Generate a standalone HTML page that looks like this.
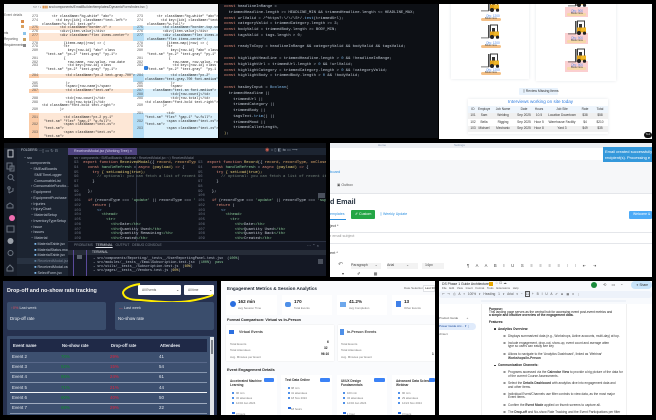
<!DOCTYPE html>
<html><head><meta charset="utf-8"><style>
html,body{margin:0;padding:0;background:#000}
#r{position:relative;width:656px;height:420px;overflow:hidden;background:#000;font-family:"Liberation Sans",sans-serif}
.p{position:absolute;overflow:hidden}
.p div,.p svg{position:absolute}
.t{white-space:nowrap;line-height:1}
.m{font-family:"Liberation Mono",monospace;white-space:pre;line-height:1}
.s{white-space:pre;line-height:1}
.k{color:#e8907e}.c{color:#7fb8e8}.g{color:#8fd19e}.y{color:#e8cf7a}
.b{font-weight:bold}
table{border-collapse:collapse;table-layout:fixed}
td{padding:0;text-align:center;height:6.4px;line-height:6.4px;font-size:3.2px;color:#333;white-space:nowrap;overflow:hidden}
</style></head><body><div id="r">

<!-- P1 diff -->
<div class="p" style="left:4px;top:4px;width:214px;height:134px;background:#fff">
<div style="left:0;top:0;width:214px;height:8px;background:#f2f4f6"></div>
<div class="t" style="left:29px;top:2px;font-size:3.4px;color:#444">&lt;&gt; ↑↓ <span style="color:#d9822b">▮▮▮</span> src/components/EmailBuilder/templates/DynamicForm/index.tsx ▯</div>
<div class="t" style="left:0;top:10px;font-size:3.2px;color:#666">Event details</div>
<div style="left:17px;top:16px;width:3px;height:3px;background:#d98b4a"></div>
<div style="left:17px;top:21px;width:3px;height:3px;background:#d9a060"></div>
<div class="t" style="left:0;top:28px;font-size:3.2px;color:#555">nts</div>
<div style="left:19px;top:28px;width:3px;height:3px;background:#8cc4ea"></div>
<div class="t" style="left:0;top:34px;font-size:3.2px;color:#555">Reporting</div>
<div style="left:19px;top:34px;width:3px;height:3px;background:#c8a060"></div>
<div class="t" style="left:0;top:40px;font-size:3.2px;color:#555">Requirements</div>
<div style="left:19px;top:40px;width:3px;height:3px;background:#888"></div>

<div style="left:25px;top:22px;width:104px;height:4px;background:#fde7d6"></div>
<div style="left:25px;top:29px;width:104px;height:8px;background:#fde7d6"></div>
<div style="left:25px;top:70px;width:104px;height:4px;background:#fde7d6"></div>
<div style="left:25px;top:85px;width:104px;height:4px;background:#fde7d6"></div>
<div style="left:25px;top:109px;width:104px;height:25px;background:#fde7d6"></div>
<div style="left:25px;top:22px;width:10px;height:4px;background:#fbcba6"></div>
<div style="left:25px;top:29px;width:10px;height:8px;background:#fbcba6"></div>
<div style="left:25px;top:70px;width:10px;height:4px;background:#fbcba6"></div>
<div style="left:25px;top:85px;width:10px;height:4px;background:#fbcba6"></div>
<div style="left:25px;top:109px;width:10px;height:25px;background:#fbcba6"></div>

<div style="left:129px;top:22px;width:85px;height:4px;background:#dcf1fc"></div>
<div style="left:129px;top:29px;width:85px;height:8px;background:#dcf1fc"></div>
<div style="left:129px;top:70px;width:85px;height:8px;background:#dcf1fc"></div>
<div style="left:129px;top:85px;width:85px;height:8px;background:#dcf1fc"></div>
<div style="left:129px;top:109px;width:85px;height:25px;background:#dcf1fc"></div>
<div style="left:129px;top:22px;width:11px;height:4px;background:#b5def6"></div>
<div style="left:129px;top:29px;width:11px;height:8px;background:#b5def6"></div>
<div style="left:129px;top:70px;width:11px;height:8px;background:#b5def6"></div>
<div style="left:129px;top:85px;width:11px;height:8px;background:#b5def6"></div>
<div style="left:129px;top:109px;width:11px;height:25px;background:#b5def6"></div>
<div style="left:140px;top:62px;width:4px;height:4px;background:#2f7fe0;border-radius:1px"></div>

<div class="m" style="left:28px;top:11px;font-size:3.3px;line-height:3.8px;color:#555">273  <span style="color:#222">     &lt;tr className="bg-white" "abc"&gt;</span>
274  <span style="color:#222">       &lt;td key={idx} className="text-left"&gt;</span>
<span style="color:#222">     className="w-full text-sm"&gt;</span>
275  <span style="color:#222">         &lt;td className="border-t" &gt;</span>
276  <span style="color:#222">         &lt;div&gt;{item.value}&lt;/div&gt;</span>
277  <span style="color:#222">         &lt;div className="flex items-center"&gt;</span>

278  <span style="color:#222">           {items.map((row) =&gt; (</span>
279  <span style="color:#222">           &lt;tr</span>
280  <span style="color:#222">             key={row.id} "abc" class</span>
<span style="color:#222">       "text-sm" "px-2" "text-gray" "py-1"&gt;</span>
281  <span style="color:#222">           {</span>
282  <span style="color:#222">             row.name, row.value, row.date</span>
283  <span style="color:#222">             &lt;td key={row.id} class</span>
<span style="color:#222">       "text-sm" "px-2" "text-gray" "py-1"&gt;</span></div>
<div class="m" style="left:28px;top:70px;font-size:3.3px;line-height:3.8px;color:#555">284  <span style="color:#222">            &lt;td className="px-2 text-gray-700"&gt;</span>

285  <span style="color:#222">            )&gt;</span>
286  <span style="color:#222">            &lt;span&gt;{row.name}&lt;/span&gt;</span>
287  <span style="color:#222">            &lt;td className="text-sm"&gt;</span>

288  <span style="color:#222">            &lt;td&gt;{row.count}&lt;/td&gt;</span>
289  <span style="color:#222">            &lt;td&gt;{row.total}&lt;/td&gt;</span>
<span style="color:#222">     &lt;td className="font-bold text-right"&gt;</span>
290  <span style="color:#222">         )&gt;</span>

291  <span style="color:#222">           &lt;td className="px-2 py-1"</span>
<span style="color:#222">      "text-sm" "flex" "gap-1" "w-full"&gt;</span>
292  <span style="color:#222">           &lt;span className="text-xs"&gt;</span>
<span style="color:#222">      "text-sm"&gt;</span>
293  <span style="color:#222">           &lt;span className="text-xs"&gt;</span>
<span style="color:#222">      "text-sm"&gt;</span></div>

<div class="m" style="left:133px;top:11px;font-size:3.3px;line-height:3.8px;color:#555">273 <span style="color:#222">      &lt;tr className="bg-white" "abc"&gt;</span>
274 <span style="color:#222">        &lt;td key={idx} className="text-l</span>
<span style="color:#222">     className="w-full"&gt;</span>
275 <span style="color:#222">         &lt;td className="border-top-solid</span>
276 <span style="color:#222">         &lt;div&gt;{item.value}&lt;/div&gt;</span>
277 <span style="color:#222">         &lt;div className="flex items-cent</span>
<span style="color:#222">     className="flex items-center"&gt;</span>
278 <span style="color:#222">           {items.map((row) =&gt; (</span>
279 <span style="color:#222">           &lt;tr</span>
280 <span style="color:#222">             key={row.id} "abc" class</span>
<span style="color:#222">     "text-sm" "px-2" "text-gray" "py-1"</span>
281 <span style="color:#222">            {</span>
282 <span style="color:#222">              row.name, row.value, row.</span>
283 <span style="color:#222">              &lt;td key={row.id} class</span>
<span style="color:#222">     "text-sm" "px-2" "text-gray"  "py-1</span></div>
<div class="m" style="left:133px;top:70px;font-size:3.3px;line-height:3.8px;color:#555">284 <span style="color:#222">             &lt;td className="px-2"</span>
<span style="color:#222">    className="text-gray-700 font-medium"&gt;</span>
285 <span style="color:#222">             )&gt;</span>
286 <span style="color:#222">             &lt;span&gt;</span>
287 <span style="color:#222">    className="text-sm font-medium"&gt;</span>
288 <span style="color:#222">             &lt;td&gt;{row.count}&lt;/td&gt;</span>
289 <span style="color:#222">             &lt;td&gt;{row.total}&lt;/td&gt;</span>
<span style="color:#222">    &lt;td className="font-bold text-right"&gt;</span>
290 <span style="color:#222">         )&gt;</span>

291 <span style="color:#222">           &lt;td&gt;</span>
<span style="color:#222">    "text-sm" "flex" "gap-1" "w-full"&gt;</span>
292 <span style="color:#222">           &lt;span className="text-xs"&gt;</span>
<span style="color:#222">    "text-sm"&gt;</span>
293 <span style="color:#222">           &lt;span className="text-xs"&gt;</span></div>
</div>

<!-- P2 code -->
<div class="p" style="left:219px;top:4px;width:219px;height:134px;background:#0d1015">
<div class="m" style="left:5px;top:1px;font-size:3.84px;line-height:5.78px;color:#c6ced8"><span class="k">const</span> headlineInRange =
  trimmedHeadline.length &gt;= HEADLINE_MIN &amp;&amp; trimmedHeadline.length &lt;= HEADLINE_MAX;
<span class="k">const</span> urlValid = /^https?:\/\/\S+/.<span class="c">test</span>(trimmedUrl);
<span class="k">const</span> categoryValid = trimmedCategory.length &gt;= 3;
<span class="k">const</span> bodyValid = trimmedBody.length &gt;= BODY_MIN;
<span class="k">const</span> tagsValid = tags.length &gt; 0;

<span class="k">const</span> readyToCopy = headlineInRange &amp;&amp; categoryValid &amp;&amp; bodyValid &amp;&amp; tagsValid;

<span class="k">const</span> highlightHeadline = trimmedHeadline.length &gt; <span class="c">0</span> &amp;&amp; !headlineInRange;
<span class="k">const</span> highlightUrl = trimmedUrl.length &gt; <span class="c">0</span> &amp;&amp; !urlValid;
<span class="k">const</span> highlightCategory = trimmedCategory.length &gt; <span class="c">0</span> &amp;&amp; !categoryValid;
<span class="k">const</span> highlightBody = trimmedBody.length &gt; <span class="c">0</span> &amp;&amp; !bodyValid;

<span class="k">const</span> hasAnyInput = <span class="c">Boolean</span>(
  trimmedHeadline ||
    trimmedUrl ||
    trimmedCategory ||
    trimmedBody ||
    tagsText.<span class="c">trim</span>() ||
    trimmedMood ||
    trimmedCallerLength,
<span class="y">)</span>;</div>
</div>

<!-- P3 forklifts -->
<div class="p" style="left:439px;top:4px;width:213px;height:135px;background:#fff">
<div style="left:12px;top:-4px;width:78px;height:79px;background:#fff;box-shadow:0 0 3px #e4e6ea"></div>
<div style="left:97px;top:-4px;width:80px;height:81px;background:#fff;box-shadow:0 0 3px #e4e6ea"></div>
<div style="left:126px;top:3px;width:23px;height:10px;background:#fbcfd0"></div>
<div style="left:126px;top:29px;width:23px;height:11px;background:#fbcfd0"></div>
<div style="left:126px;top:57px;width:23px;height:11px;background:#fbcfd0"></div>
<svg style="left:0;top:0" width="213" height="80" viewBox="0 0 213 80">
<defs><g id="fk"><rect x="9.500" y="1" width="7" height="7" fill="none" stroke="#3a3a3a" stroke-width="1"/><rect x="11" y="4" width="3" height="4" fill="#333"/><rect x="9" y="7.500" width="9" height="5" fill="#e2a31c"/><rect x="13" y="8" width="5" height="3" fill="#f0b828"/><rect x="7" y="1" width="1.600" height="13" fill="#4a4a4a"/><rect x="0" y="13.500" width="8" height=".8" fill="#555"/><circle cx="11" cy="13" r="2" fill="#222"/><circle cx="16.500" cy="13.200" r="1.600" fill="#222"/></g></defs>
<use href="#fk" x="42" y="-7"/><use href="#fk" x="42" y="20"/><use href="#fk" x="42" y="49"/>
<use href="#fk" x="129" y="-12"/><use href="#fk" x="129" y="16"/><use href="#fk" x="129" y="44"/>
</svg>
<div class="t" style="left:47px;top:10.500px;font-size:3.2px;color:#5a8fe8">Qty: 1200</div>
<div class="t" style="left:47px;top:37.500px;font-size:3.2px;color:#5a8fe8">Qty: 1200</div>
<div class="t" style="left:47px;top:64.500px;font-size:3.2px;color:#5a8fe8">Qty: 1200</div>
<div style="left:42px;top:13.500px;width:20px;height:3.500px;background:#f4c087;border-radius:2px"></div>
<div style="left:42px;top:40.500px;width:20px;height:3.500px;background:#f4c087;border-radius:2px"></div>
<div style="left:42px;top:67.500px;width:20px;height:3.500px;background:#f4c087;border-radius:2px"></div>
<div class="t" style="left:46px;top:14px;font-size:2.6px;color:#444">Book Now</div>
<div class="t" style="left:46px;top:41px;font-size:2.6px;color:#444">Book Now</div>
<div class="t" style="left:46px;top:68px;font-size:2.6px;color:#444">Book Now</div>
<div class="t" style="left:132px;top:5.500px;font-size:3.2px;color:#5a8fe8">Qty: 900</div>
<div class="t" style="left:132px;top:32.500px;font-size:3.2px;color:#5a8fe8">Qty: 900</div>
<div class="t" style="left:132px;top:59.500px;font-size:3.2px;color:#5a8fe8">Qty: 900</div>
<div style="left:128px;top:8.500px;width:19px;height:3.500px;background:#f6d8a8;border-radius:1px"></div>
<div style="left:128px;top:35.500px;width:19px;height:3.500px;background:#f6d8a8;border-radius:1px"></div>
<div style="left:128px;top:62.500px;width:19px;height:3.500px;background:#f6d8a8;border-radius:1px"></div>
<div class="t" style="left:132px;top:9px;font-size:2.6px;color:#444">Book Now</div>
<div class="t" style="left:132px;top:36px;font-size:2.6px;color:#444">Book Now</div>
<div class="t" style="left:132px;top:63px;font-size:2.6px;color:#444">Book Now</div>
<div style="left:80px;top:84px;width:39px;height:7px;background:#e8f2fc;border-radius:1px"></div>
<div class="t" style="left:84px;top:86px;font-size:3.4px;color:#333">▯ Review Missing Items</div>
<div style="left:29px;top:95px;width:140px;height:35px;background:#fff;box-shadow:0 0 3px #e4e6ea"></div>
<div class="t" style="left:69px;top:95.500px;font-size:4.6px;color:#2f7de0">Interviews working on site today</div>
<div style="left:29px;top:102px;width:140px;height:6.500px;background:#eef5fc"></div>
<div style="left:29px;top:108.500px;width:140px;height:6.500px;background:#f0f0f0"></div>
<div style="left:29px;top:121.500px;width:140px;height:6.500px;background:#f0f0f0"></div>
<div style="left:29px;top:102px;width:140px">
<table style="width:140px"><colgroup><col style="width:10px"><col style="width:12px"><col style="width:26px"><col style="width:16px"><col style="width:14px"><col style="width:32px"><col style="width:14px"><col style="width:16px"></colgroup>
<tr><td>ID</td><td>Employee</td><td>Job Name</td><td>Date</td><td>Hours</td><td>Job Site</td><td>Rate</td><td>Total</td></tr>
<tr><td>101</td><td>Sam</td><td>Welding</td><td>Sep 2025</td><td>10.5</td><td>Location Downtown</td><td>$38</td><td>$58</td></tr>
<tr><td>102</td><td>Bella</td><td>Rigging</td><td>Sep 2025</td><td>Hour 5</td><td>Warehouse Facility</td><td>$4</td><td>$210</td></tr>
<tr><td>103</td><td>Michael</td><td>Mechanic</td><td>Sep 2025</td><td>Hour 8</td><td>Yard 3</td><td>$49</td><td>$35</td></tr>
</table></div>
<div style="left:205px;top:128px;width:8px;height:6px;background:#111;border-radius:3px"></div>
<div class="t" style="left:206.500px;top:129.500px;font-size:2.6px;color:#ddd">Tool</div>
</div>

<!-- P4 vscode -->
<div class="p" style="left:4px;top:143px;width:322px;height:133px;background:#10131b">
<div style="left:0;top:0;width:322px;height:5px;background:#0f1218"></div>
<div style="left:0;top:5px;width:13px;height:128px;background:#181e2a"></div>
<div style="left:13px;top:5px;width:51px;height:128px;background:#1c2431"></div>
<svg style="left:0;top:0" width="14" height="133" fill="none" stroke="#6b7480" stroke-width="1">
<rect x="4" y="7" width="5" height="7" stroke="#c4c8cf"/><path d="M3 20h5v6H3zM6 23h4v5H6z"/><circle cx="6.500" cy="34" r="2.400"/><path d="M8.300 35.800l2 2"/><circle cx="5" cy="45" r="1.200"/><path d="M5 46v4M9 45v3l-4 2"/><path d="M3 62l3-2 3 2v3H3z"/><circle cx="8" cy="75" r="3" fill="#ef6db0" stroke="none"/><rect x="3" y="83" width="7" height="6"/><circle cx="6.500" cy="98" r="3" fill="#9aa0a8" stroke="none"/><circle cx="6.500" cy="110" r="2.500"/><path d="M3 125l3-3 3 3v3H3z"/></svg>
<div class="t" style="left:17px;top:6px;font-size:3.4px;color:#c8ced8">FOLDERS: ...</div>
<div class="t" style="left:38px;top:6px;font-size:4px;color:#8a93a0">▯ ▭ ↻ ⊟</div>
<div class="s" style="left:20px;top:12.500px;font-size:3.7px;line-height:5.75px;color:#bcc4d0">~ src
   ~ components
      ~ SMEadBoards
          SMETimeLogger
          ConsumableList
       › ConsumableFunctio...
       › Equipment
       › EquipmentPurchase
       › Injuries
       › InjuryChart
       ~ MaterialSetup
       › InventoryTypeSetup
       › Issue
       › Issues
       ~ Material
          <span class="c">■</span> MaterialTable.jsx
          <span class="c">■</span> MaterialStatus.module...
          <span class="c">■</span> MaterialTable.jsx
          <span class="c">■</span> ReceivedModal.jsx
          <span class="c">■</span> ReceivedModal.css
          <span class="c">■</span> SelectForm.jsx</div>
<div style="left:13px;top:115px;width:51px;height:6px;background:#33405280"></div>
<div style="left:64px;top:5px;width:258px;height:7px;background:#1c2431"></div>
<div style="left:64px;top:5px;width:69px;height:7px;background:#4f4480"></div>
<div class="t" style="left:70px;top:7px;font-size:3.6px;color:#dcd4f0">ReceivedModal.jsx (Working Tree) ×</div>
<div class="t" style="left:261px;top:5px;font-size:5px;color:#d06050">◉ <span style="color:#8a93a0;font-size:4px">⌂ ▯ ◧ ⇆ ▭ ⟶</span></div>
<div class="t" style="left:70px;top:14px;font-size:3.2px;color:#808894">src › components › SMEadBoards › Material › ReceivedModal.jsx › ⟨⟩ ReceivedModal</div>
<div style="left:132px;top:18px;width:1px;height:80px;background:#2a3040"></div>
<div class="m" style="left:70px;top:18px;font-size:3.84px;line-height:4.77px;color:#c6ced8"><span style="color:#6a7280">93  </span><span class="k">export function</span> <span class="y">ReceivedModal</span>({ <span style="color:#e8b070">record, recordType, onClose</span>
<span style="color:#6a7280">94  </span>  <span class="k">const</span> <span class="g">handleRefresh</span> = <span class="k">async</span> <span class="y">(payload)</span> <span class="k">=&gt;</span> {
<span style="color:#6a7280">95  </span>    <span class="k">try</span> <span class="y">{ setLoading(true);</span>
<span style="color:#6a7280">96  </span>      <span style="color:#7a8a80">// optional: you can fetch a list of recent items</span>
<span style="color:#6a7280">97  </span>    }
<span style="color:#6a7280">98  </span>
<span style="color:#6a7280">99  </span>  };
<span style="color:#6a7280">100 </span>
<span style="color:#6a7280">101 </span>  <span class="k">if</span> (recordType === <span class="g">'update'</span> || recordType === <span class="g">'keep</span>
<span style="color:#6a7280">102 </span>    <span class="k">return</span> (
<span style="color:#6a7280">103 </span>      <span class="c">&lt;&gt;</span>
<span style="color:#6a7280">104 </span>        <span class="g">&lt;thead&gt;</span>
<span style="color:#6a7280">105 </span>          <span class="g">&lt;tr&gt;</span>
<span style="color:#6a7280">106 </span>            <span class="g">&lt;th&gt;</span>Date<span class="g">&lt;/th&gt;</span>
<span style="color:#6a7280">107 </span>            <span class="g">&lt;th&gt;</span>Quantity Used<span class="g">&lt;/th&gt;</span>
<span style="color:#6a7280">108 </span>            <span class="g">&lt;th&gt;</span>Quantity Remaining<span class="g">&lt;/th&gt;</span>
<span style="color:#6a7280">109 </span>            <span class="g">&lt;th&gt;</span>Created<span class="g">&lt;/th&gt;</span></div>
<div style="left:192px;top:16px;width:130px;height:82px;background:#10131b"></div>
<div class="m" style="left:194px;top:18px;font-size:3.84px;line-height:4.77px;color:#c6ced8"><span style="color:#6a7280">93  </span><span class="k">export function</span> <span class="y">Record</span>({ <span style="color:#e8b070">record, recordType, onClose</span>
<span style="color:#6a7280">94  </span>  <span class="k">const</span> <span class="g">handleRefresh</span> = <span class="k">async</span> <span class="y">(payload)</span> <span class="k">=&gt;</span> {
<span style="color:#6a7280">95  </span>    <span class="k">try</span> <span class="y">{ setLoad(true);</span>
<span style="color:#6a7280">96  </span>      <span style="color:#7a8a80">// optional: you can fetch a list of recent ite</span>
<span style="color:#6a7280">97  </span>    }
<span style="color:#6a7280">98  </span>
<span style="color:#6a7280">99  </span>  };
<span style="color:#6a7280">100 </span>
<span style="color:#6a7280">101 </span>  <span class="k">if</span> (recordType === <span class="g">'update'</span> || recordType === <span class="g">'supplies'</span>
<span style="color:#6a7280">102 </span>    <span class="k">return</span> (
<span style="color:#6a7280">103 </span>      <span class="c">&lt;&gt;</span>
<span style="color:#6a7280">104 </span>        <span class="g">&lt;thead&gt;</span>
<span style="color:#6a7280">105 </span>          <span class="g">&lt;tr&gt;</span>
<span style="color:#6a7280">106 </span>            <span class="g">&lt;th&gt;</span>Date<span class="g">&lt;/th&gt;</span>
<span style="color:#6a7280">107 </span>            <span class="g">&lt;th&gt;</span>Quantity Used<span class="g">&lt;/th&gt;</span>
<span style="color:#6a7280">108 </span>            <span class="g">&lt;th&gt;</span>Quantity Back<span class="g">&lt;/th&gt;</span>
<span style="color:#6a7280">109 </span>            <span class="g">&lt;th&gt;</span>Created<span class="g">&lt;/th&gt;</span></div>
<div style="left:314px;top:50px;width:7px;height:5px;background:#4a505c"></div>
<div style="left:64px;top:98px;width:258px;height:35px;background:#141824;border-top:1px solid #2a3040"></div>
<div class="t" style="left:70px;top:101px;font-size:3.4px;color:#7c8590">PROBLEMS &nbsp; <span style="color:#dfe3ea;text-decoration:underline">TERMINAL</span> &nbsp; OUTPUT &nbsp; DEBUG CONSOLE</div>
<div class="t" style="left:303px;top:101px;font-size:4px;color:#8a93a0">⋯ ⌃ ×</div>
<div style="left:64px;top:107px;width:258px;height:5px;background:#262c38"></div>
<div class="t" style="left:88px;top:108px;font-size:3.2px;color:#d0d4da">TERMINAL</div>
<div style="left:69px;top:107px;width:1px;height:26px;background:#5a4a9a"></div>
<div style="left:82px;top:107px;width:1px;height:26px;background:#5a4a9a"></div>
<div style="left:73px;top:112px;width:5px;height:4px;background:#58606c"></div>
<div class="m" style="left:89px;top:115px;font-size:3.4px;line-height:3.9px;color:#bcc4d0">→ src/components/Reporting/__tests__/UserReportingPanel.test.jsx  (<span class="g">100%</span>)
→ src/modules/__tests__/EmailSubscription.test.jsx  (<span class="g">100%</span>)  <span class="g">pass</span>
→ src/utils/__tests__/Subscription.test.js  (<span class="y">60%</span>)
→ src/pages/__tests__/Vendors.test.js (<span class="y">60%</span>)</div>
<div style="left:314px;top:116px;width:5px;height:5px;background:#4a505c"></div>
</div>

<!-- P5 email -->
<div class="p" style="left:330px;top:143px;width:322px;height:134px;background:#fff">
<div style="left:0;top:0;width:322px;height:5px;background:#eceef2"></div>
<div class="t" style="left:48px;top:1px;font-size:3px;color:#8a9ab0">Home</div>
<div class="t" style="left:124px;top:1px;font-size:3px;color:#8a9ab0">Settings</div>
<div style="left:0;top:17px;width:322px;height:33px;background:#f6f7f9;border-bottom:1px solid #e4e6ea"></div>
<div style="left:0;top:5px;width:322px;height:12px;background:#fff"></div>
<div class="t" style="left:0;top:27px;font-size:4px;color:#2b8fe0">board</div>
<div class="t" style="left:7px;top:41px;font-size:3.6px;color:#555">▣ Outbox</div>
<div class="t b" style="left:0;top:55px;font-size:7.2px;color:#24313f">d Email</div>
<div class="t" style="left:0;top:70px;font-size:3.6px;color:#2b8fe0">emplates</div>
<div style="left:0;top:76px;width:16px;height:1px;background:#2b8fe0"></div>
<div style="left:21px;top:67px;width:24px;height:9px;background:#24a645;border-radius:1px"></div>
<div class="t" style="left:25px;top:70px;font-size:3.6px;color:#fff">✐ Custom</div>
<div class="t" style="left:50px;top:70px;font-size:3.6px;color:#2b8fe0">▯ Weekly Update</div>
<div style="left:299px;top:68px;width:23px;height:8px;background:#4dabf7;border-radius:1px"></div>
<div class="t" style="left:303px;top:70px;font-size:3.4px;color:#fff">Welcome &amp;</div>
<div class="t" style="left:0;top:82px;font-size:3.8px;color:#333">ject *</div>
<div style="left:0;top:89px;width:322px;height:10px;border-top:1px solid #e4e6ea;border-bottom:1px solid #e4e6ea"></div>
<div class="t" style="left:0;top:92px;font-size:3.8px;color:#999">r email subject</div>
<div class="t" style="left:0;top:109px;font-size:3.8px;color:#333">ent *</div>
<div class="t" style="left:8px;top:119px;font-size:6px;color:#777">↶</div>
<div style="left:21px;top:120px;width:30px;height:6px;background:#f3f3f3"></div>
<div style="left:57px;top:120px;width:31px;height:6px;background:#f3f3f3"></div>
<div style="left:92px;top:120px;width:22px;height:6px;background:#f3f3f3"></div>
<div class="t" style="left:21px;top:121px;font-size:3.6px;color:#444">Paragraph &nbsp; &nbsp; &nbsp; ⌄</div>
<div class="t" style="left:57px;top:121px;font-size:3.6px;color:#444">Arial &nbsp; &nbsp; &nbsp; &nbsp; &nbsp; &nbsp;⌄</div>
<div class="t" style="left:95px;top:121px;font-size:3.6px;color:#444">14px</div>
<div class="t" style="left:137px;top:121px;font-size:4.2px;color:#444;word-spacing:5.500px">¶ A A B I U S ≡ ≡ ≡ ≡ ⁝ ⁝ ⇤ ⇥</div>
<div class="t" style="left:12px;top:129px;font-size:4px;color:#444;word-spacing:12px">▾ ✐ ▦</div>
<div style="left:273px;top:4px;width:49px;height:15px;background:#3498db"></div>
<div class="t" style="left:275px;top:6px;font-size:4px;line-height:6px;color:#fff">Email created successfully<br>recipient(s). Processing e</div>
</div>

<!-- P6 dashboard -->
<div class="p" style="left:3px;top:281px;width:214px;height:134px;background:#26314f">
<div class="t b" style="left:4px;top:8px;font-size:5.4px;color:#f2f2f4">Drop-off and no-show rate tracking</div>
<div style="left:135px;top:4px;width:43px;height:10px;background:#fff;border-radius:1px"></div>
<div style="left:181px;top:4px;width:30px;height:10px;background:#fff;border-radius:1px"></div>
<div class="t" style="left:139px;top:7.500px;font-size:3.2px;color:#555">All Events</div>
<div class="t" style="left:185px;top:7.500px;font-size:3.2px;color:#555">All time</div>
<div class="t" style="left:173px;top:7px;font-size:4px;color:#333">⌄</div>
<div class="t" style="left:206px;top:7px;font-size:4px;color:#333">⌄</div>
<svg style="left:0;top:0" width="214" height="30" fill="none"><path d="M137 3C128 4 120 8 120 12C121 17 128 19 137 19C150 20 165 22 174 21C185 21 200 18 210 14" stroke="#ffec00" stroke-width="2"/></svg>
<div style="left:4px;top:21px;width:99px;height:28px;background:#3a4d6c;border-radius:2px"></div>
<div style="left:112px;top:21px;width:99px;height:28px;background:#3a4d6c;border-radius:2px"></div>
<div class="t" style="left:8px;top:26px;font-size:3.8px;color:#d8dde4"><span style="color:#e05060">↑0%</span> Last week</div>
<div class="t" style="left:116px;top:26px;font-size:3.8px;color:#d8dde4"><span style="color:#e05060">—</span> Last week</div>
<div class="t" style="left:7px;top:36px;font-size:4.4px;color:#eceef2">Drop-off rate</div>
<div class="t" style="left:115px;top:36px;font-size:4.4px;color:#eceef2">No-show rate</div>
<div style="left:4px;top:55px;width:207px;height:79px;background:#3d5070;border-radius:1px"></div>
<div style="left:207px;top:56px;width:4px;height:78px;background:#dfe2e6"></div>
<div style="left:208px;top:59px;width:2px;height:14px;background:#7a7f86"></div>
<div style="left:7px;top:58px;width:197px;height:13px;background:#1f2947"></div>
<div class="t b" style="left:10px;top:63px;font-size:4.2px;color:#e8ecf2">Event name</div>
<div class="t b" style="left:59px;top:63px;font-size:4.2px;color:#e8ecf2">No-show rate</div>
<div class="t b" style="left:108px;top:63px;font-size:4.2px;color:#e8ecf2">Drop-off rate</div>
<div class="t b" style="left:157px;top:63px;font-size:4.2px;color:#e8ecf2">Attendees</div>
<div style="left:7px;top:81px;width:197px;height:1px;background:#59698a"></div>
<div style="left:7px;top:91px;width:197px;height:1px;background:#8796ae"></div>
<div style="left:7px;top:101px;width:197px;height:1px;background:#8796ae"></div>
<div style="left:7px;top:111px;width:197px;height:1px;background:#f2f4f6"></div>
<div style="left:7px;top:122px;width:197px;height:1px;background:#a0acc0"></div>
<div style="left:7px;top:132px;width:197px;height:1px;background:#8796ae"></div>
<div class="s" style="left:9px;top:71px;font-size:4.4px;line-height:10.2px;color:#e4e8ee">Event 2
Event 3
Event 4
Event 5
Event 6
Event 7</div>
<div class="s" style="left:58px;top:71px;font-size:4.4px;line-height:10.2px;color:#0e8a2c">70%
52%
85%
71%
60%
68%</div>
<div class="s" style="left:107px;top:71px;font-size:4.4px;line-height:10.2px;color:#e0243c">29%
15%
24%
21%
40%
29%</div>
<div class="s" style="left:156px;top:71px;font-size:4.4px;line-height:10.2px;color:#e4e8ee">41
54
61
44
50
22</div>
</div>

<!-- P7 analytics -->
<div class="p" style="left:221px;top:281px;width:214px;height:134px;background:#fafbfd">
<div class="t b" style="left:6px;top:6px;font-size:4.6px;color:#1c2430">Engagement Metrics &amp; Session Analytics</div>
<div class="t" style="left:183px;top:6px;font-size:3px;color:#666">Date Selection</div>
<div style="left:202px;top:4px;width:12px;height:7px;background:#fff;border:1px solid #e0e2e6;box-sizing:border-box"></div>
<div class="t" style="left:204px;top:6px;font-size:3px;color:#333">Last 30</div>

<div style="left:5px;top:14px;width:51px;height:20px;background:#fff"></div>
<div style="left:61px;top:14px;width:50px;height:20px;background:#fff"></div>
<div style="left:116px;top:14px;width:50px;height:20px;background:#fff"></div>
<div style="left:171px;top:14px;width:43px;height:20px;background:#fff"></div>
<div style="left:9px;top:20px;width:6px;height:6px;border-radius:50%;background:#2b6fe0"></div>
<div style="left:64px;top:21px;width:6px;height:5px;border-radius:2px;background:#4f90e8"></div>
<div style="left:119px;top:21px;width:6px;height:5px;background:#6ea8ec"></div>
<div style="left:175px;top:20px;width:5px;height:6px;background:#4080e8"></div>
<div class="t b" style="left:17px;top:19px;font-size:4.6px;color:#222">162 min</div>
<div class="t b" style="left:73px;top:19px;font-size:4.6px;color:#222">170</div>
<div class="t b" style="left:128px;top:19px;font-size:4.6px;color:#222">41.2%</div>
<div class="t b" style="left:183px;top:19px;font-size:4.6px;color:#222">13</div>
<div class="t" style="left:17px;top:26px;font-size:2.9px;color:#777">Avg Session Time</div>
<div class="t" style="left:73px;top:26px;font-size:2.9px;color:#777">Total Events</div>
<div class="t" style="left:128px;top:26px;font-size:2.9px;color:#777">Avg Completion</div>
<div class="t" style="left:183px;top:26px;font-size:2.9px;color:#777">Other Events</div>

<div class="t b" style="left:6px;top:38px;font-size:3.8px;color:#222">Format Comparison: Virtual vs In-Person</div>
<div style="left:5px;top:44px;width:108px;height:36px;background:#fff;box-shadow:0 0 1px #ddd"></div>
<div style="left:117px;top:44px;width:97px;height:36px;background:#fff;box-shadow:0 0 1px #ddd"></div>
<div style="left:8px;top:49px;width:5px;height:4px;background:#2b6fe0"></div>
<div style="left:119px;top:48px;width:4px;height:6px;background:#4f90e8"></div>
<div class="t b" style="left:18px;top:50px;font-size:3.6px;color:#444">Virtual Events</div>
<div class="t b" style="left:126px;top:50px;font-size:3.6px;color:#444">In-Person Events</div>
<div class="s" style="left:9px;top:60px;font-size:3px;line-height:6.3px;color:#777">Total Events
Total Attendees
Avg. Minutes per Event</div>
<div class="s" style="left:120px;top:60px;font-size:3px;line-height:6.3px;color:#777">Total Events
Total Attendees
Avg. Minutes per Event</div>
<div class="t b" style="left:106px;top:60px;font-size:3.2px;color:#222">6</div>
<div class="t b" style="left:103px;top:66px;font-size:3.2px;color:#222">32</div>
<div class="t b" style="left:100px;top:72px;font-size:3.2px;color:#222">96:10</div>
<div class="t b" style="left:211px;top:72px;font-size:3.2px;color:#222">1</div>

<div class="t b" style="left:6px;top:88px;font-size:3.8px;color:#222">Event Engagement Details</div>
<div style="left:5px;top:94px;width:51px;height:40px;background:#fff"></div>
<div style="left:60px;top:94px;width:51px;height:40px;background:#fff"></div>
<div style="left:116px;top:94px;width:50px;height:40px;background:#fff"></div>
<div style="left:171px;top:94px;width:43px;height:40px;background:#fff"></div>
<div class="t b" style="left:9px;top:98px;font-size:3.2px;line-height:4px;color:#333">Accelerated Machine<br>Learning</div>
<div class="t b" style="left:64px;top:98px;font-size:3.2px;color:#333">Test Data Online</div>
<div class="t b" style="left:120px;top:98px;font-size:3.2px;line-height:4px;color:#333">UI/UX Design<br>Fundamentals</div>
<div class="t b" style="left:175px;top:98px;font-size:3.2px;line-height:4px;color:#333">Advanced Data Science<br>Webinar</div>
<div style="left:43px;top:97px;width:10px;height:4px;background:#3b82f6;border-radius:1px"></div>
<div style="left:99px;top:97px;width:10px;height:4px;background:#3b82f6;border-radius:1px"></div>
<div style="left:153px;top:97px;width:11px;height:4px;background:#3b82f6;border-radius:1px"></div>
<div style="left:208px;top:97px;width:6px;height:4px;background:#3b82f6;border-radius:1px"></div>
<div class="s" style="left:15px;top:110px;font-size:2.8px;line-height:5.2px;color:#777">96 min
32 attendees
12/02 Jan 2024

3 hours</div>
<div class="s" style="left:70px;top:105px;font-size:2.8px;line-height:5.2px;color:#777">98 min
41 attendees
18 Nov 2024

18 hours</div>
<div class="s" style="left:126px;top:110px;font-size:2.8px;line-height:5.2px;color:#777">100 min
34 attendees
12/02 Jan 2024

1 hour</div>
<div class="s" style="left:181px;top:110px;font-size:2.8px;line-height:5.2px;color:#777">90 min
29 attendees
12/24 Nov 2024

3 hours</div>
<div style="left:11px;top:111px;width:2px;height:2px;background:#4f90e8"></div>
<div style="left:11px;top:116px;width:2px;height:2px;background:#4f90e8"></div>
<div style="left:11px;top:121px;width:2px;height:2px;background:#4f90e8"></div>
<div style="left:11px;top:131px;width:3px;height:2px;background:#2b6fe0"></div>
<div style="left:67px;top:106px;width:2px;height:2px;background:#4f90e8"></div>
<div style="left:67px;top:111px;width:2px;height:2px;background:#4f90e8"></div>
<div style="left:67px;top:116px;width:2px;height:2px;background:#4f90e8"></div>
<div style="left:67px;top:126px;width:3px;height:2px;background:#2b6fe0"></div>
<div style="left:122px;top:111px;width:2px;height:2px;background:#4f90e8"></div>
<div style="left:122px;top:116px;width:2px;height:2px;background:#4f90e8"></div>
<div style="left:122px;top:121px;width:2px;height:2px;background:#4f90e8"></div>
<div style="left:122px;top:131px;width:3px;height:2px;background:#2b6fe0"></div>
<div style="left:177px;top:111px;width:2px;height:2px;background:#4f90e8"></div>
<div style="left:177px;top:116px;width:2px;height:2px;background:#4f90e8"></div>
<div style="left:177px;top:121px;width:2px;height:2px;background:#4f90e8"></div>
<div style="left:177px;top:131px;width:3px;height:2px;background:#2b6fe0"></div>
</div>

<!-- P8 doc -->
<div class="p" style="left:439px;top:281px;width:213px;height:134px;background:#fff">
<div style="left:0;top:0;width:213px;height:23px;background:#f8fafd"></div>
<div class="t" style="left:3px;top:1.500px;font-size:3.4px;color:#222">DS Phase 1 Guide Architecture</div>
<div style="left:50px;top:1px;width:4px;height:4px;background:#e8a800"></div>
<div class="t" style="left:56px;top:1px;font-size:3.6px;color:#666">☆ ⊡ ☁</div>
<div class="t" style="left:3px;top:5.500px;font-size:2.8px;color:#555;word-spacing:2px">File Edit View Insert Format Tools Extensions Help</div>
<div style="left:152px;top:1px;width:6px;height:6px;border-radius:50%;background:#1a8a3c"></div>
<div class="t" style="left:164px;top:2px;font-size:4px;color:#555;word-spacing:4px">⟲ ▭ ◔</div>
<div style="left:192px;top:0;width:21px;height:8px;border-radius:4px;background:#c8e4fb"></div>
<div class="t" style="left:197px;top:2.500px;font-size:3.2px;color:#333">✦ Share</div>
<div style="left:0;top:10px;width:213px;height:7px;background:#edf2fa;border-radius:3px"></div>
<div class="t" style="left:3px;top:12px;font-size:3.2px;color:#555;word-spacing:2px">↶ ↷ ⎙ A ⌖ 100% ▾ Heading 1 ▾ Arial ▾ − <span style="outline:0.4px solid #555">11</span> + B I U A ✐ ⊞ ▦ ≡ ⋮</div>
<div style="left:42px;top:19px;width:145px;height:2px;background:#eef2f8"></div>
<div style="left:0;top:42px;width:37px;height:7px;background:#e0ebfb;border-radius:0 4px 4px 0"></div>
<div class="t" style="left:0;top:35.500px;font-size:3px;color:#555">Product Guide &nbsp; &nbsp; &nbsp; &nbsp; &nbsp;+</div>
<div class="t" style="left:0;top:44px;font-size:3px;color:#1a4a9a">Power Guide Arc... ▾ ⋮</div>
<div class="t" style="left:0;top:51.500px;font-size:3px;color:#666">chitect</div>
<div style="left:42px;top:23px;width:1px;height:111px;background:#f0f0f0"></div>
<div style="left:187px;top:23px;width:1px;height:111px;background:#f0f0f0"></div>
<div class="t b" style="left:50px;top:26.500px;font-size:3.2px;color:#222">Purpose:</div>
<div class="t" style="left:50px;top:29.500px;font-size:3.2px;line-height:3.9px;color:#222">This landing page serves as the central hub for accessing event post-event metrics and<br><b>a simple and intuitive overview of the engagement data.</b></div>
<div class="t b" style="left:50px;top:39.500px;font-size:3.2px;color:#222">Features:</div>
<div style="left:55px;top:47px;width:1.500px;height:1.500px;background:#222;border-radius:50%"></div>
<div class="t b" style="left:59px;top:46.500px;font-size:3.2px;color:#222">Analytics Overview:</div>
<div class="t" style="left:69px;top:53.500px;font-size:3.2px;color:#333">Displays summarized data (e.g., Workshops, Active accounts, multi-day) at top.</div>
<div class="t" style="left:69px;top:60.500px;font-size:3.2px;color:#333">Include engagement, drop-out, show-up, event count and average atten</div>
<div class="t" style="left:69px;top:63.800px;font-size:3.2px;color:#333">type so users can easily see key</div>
<div class="t" style="left:69px;top:71.500px;font-size:3.2px;color:#333">Allows to navigate to the 'Analytics Dashboard', linked as 'Webinar'</div>
<div class="t b" style="left:69px;top:75.500px;font-size:3.2px;color:#333">Workshops/In-Person</div>
<div style="left:55px;top:83.500px;width:1.500px;height:1.500px;background:#222;border-radius:50%"></div>
<div class="t b" style="left:59px;top:82.500px;font-size:3.2px;color:#222">Communication Channels:</div>
<div class="t" style="left:69px;top:89.500px;font-size:3.2px;color:#333">Programs accessed via the <b>Calendar View</b> to provide a big picture of the data for</div>
<div class="t" style="left:69px;top:93.500px;font-size:3.2px;color:#333">of the current Course Assessments.</div>
<div class="t" style="left:69px;top:100.500px;font-size:3.2px;color:#333">Select the <b>Details Dashboard</b> with analytics dive into engagement data and</div>
<div class="t" style="left:69px;top:104.500px;font-size:3.2px;color:#333">and other items.</div>
<div class="t" style="left:69px;top:111.500px;font-size:3.2px;color:#333">Individual Event/Channels use filter controls to view data, as the most major</div>
<div class="t" style="left:69px;top:114.500px;font-size:3.2px;color:#333">Event items.</div>
<div class="t" style="left:69px;top:122.500px;font-size:3.2px;color:#333">Confirm the <b>Event Mode</b> applied on thumb screens to capture all.</div>
<div class="t" style="left:69px;top:129.500px;font-size:3.2px;color:#333">The <b>Drop-off</b> and No-show Rate Tracking and the Event Participations per filter</div>
<svg style="left:0;top:0" width="213" height="134"><g fill="none" stroke="#333" stroke-width=".5"><circle cx="65.500" cy="55" r=".8"/><circle cx="65.500" cy="62" r=".8"/><circle cx="65.500" cy="73" r=".8"/><circle cx="65.500" cy="91" r=".8"/><circle cx="65.500" cy="102" r=".8"/><circle cx="65.500" cy="113" r=".8"/><circle cx="65.500" cy="124" r=".8"/><circle cx="65.500" cy="131" r=".8"/></g></svg>
</div>

</div></body></html>
